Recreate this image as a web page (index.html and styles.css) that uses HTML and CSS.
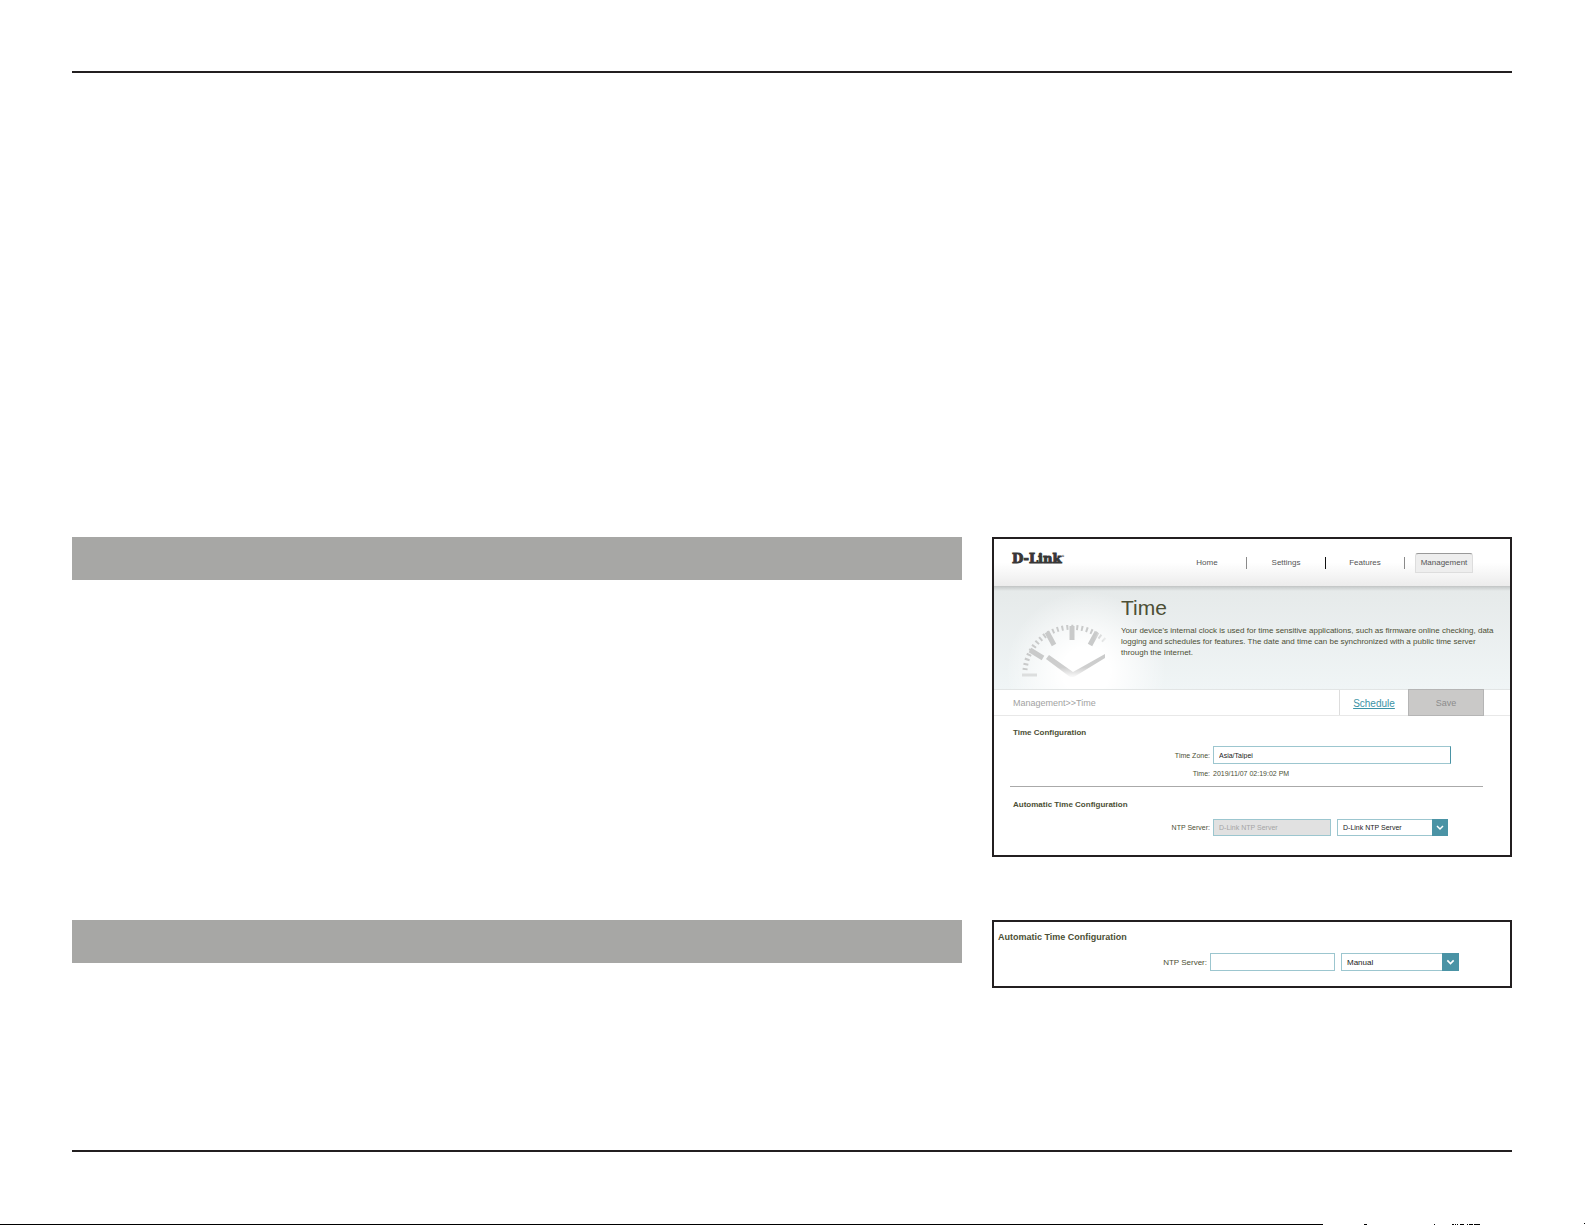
FILE: index.html
```html
<!DOCTYPE html>
<html lang="en">
<head>
<meta charset="UTF-8">
<meta name="viewport" content="width=device-width, initial-scale=1.0">
<title>Time</title>
<link rel="stylesheet" href="styles.css">
</head>
<body>
<div class="page">
	<div class="sections">
		<div class="bar"></div>
		<div class="panel">
			<header class="header">
				<div class="logo">D-Link<sup>®</sup></div>
				<nav class="nav">
					<a href="#">Home</a>
					<a href="#" class="dark">Settings</a>
					<a href="#">Features</a>
					<a href="#" class="active">Management</a>
				</nav>
			</header>
			<div class="banner">
				<svg class="clock" viewBox="0 0 110 70" width="110" height="70">
					<defs>
						<linearGradient id="fade" gradientUnits="userSpaceOnUse" x1="82" y1="0" x2="97" y2="0">
							<stop offset="0" stop-color="#c9caca"/>
							<stop offset="1" stop-color="#c9caca" stop-opacity="0.1"/>
						</linearGradient>
						<linearGradient id="hand" gradientUnits="userSpaceOnUse" x1="0" y1="38" x2="0" y2="62">
							<stop offset="0" stop-color="#c9caca"/>
							<stop offset="0.6" stop-color="#cfcfcf"/>
							<stop offset="1" stop-color="#cfcfcf" stop-opacity="0.1"/>
						</linearGradient>
					</defs>
					<!-- minute ticks -->
					<path d="M13 55A47 47 0 0 1 94 27" fill="none" stroke="url(#fade)" stroke-width="5" stroke-dasharray="2 2.92"/>
					<!-- hour ticks -->
					<path d="M18 35L31 43M35 17L42 30M60 11V25M85 17L78 30" fill="none" stroke="url(#fade)" stroke-width="5"/>
					<path d="M10 60H25" fill="none" stroke="#dcdede" stroke-width="3"/>
					<!-- hands -->
					<path d="M37 40L34 44L58 62H62L93 43V39L61 57Z" fill="url(#hand)"/>
				</svg>
				<div class="intro">
					<h1>Time</h1>
					<p>Your device's internal clock is used for time sensitive applications, such as firmware online checking, data<br>logging and schedules for features. The date and time can be synchronized with a public time server<br>through the Internet.</p>
				</div>
			</div>
			<div class="toolbar">
				<span class="crumb">Management&gt;&gt;Time</span>
				<a href="#" class="schedule">Schedule</a>
				<button class="save" disabled>Save</button>
			</div>
			<div class="settings">
				<h2>Time Configuration</h2>
				<div class="row zone-row">
					<label for="zone">Time Zone:</label>
					<input id="zone" class="zone" type="text" value="Asia/Taipei">
				</div>
				<div class="row time-row">
					<span class="label">Time:</span>
					<span>2019/11/07 02:19:02 PM</span>
				</div>
				<hr>
				<h2>Automatic Time Configuration</h2>
				<div class="row ntp-row">
					<label for="ntp">NTP Server:</label>
					<input id="ntp" type="text" value="D-Link NTP Server" disabled>
					<div class="dropdown">
						<select aria-label="NTP server type"><option>D-Link NTP Server</option><option>Manual</option></select>
						<svg viewBox="0 0 16 17"><path d="M5 7L8 10L11 7"/></svg>
					</div>
				</div>
			</div>
		</div>
		<div class="bar"></div>
		<div class="panel manual">
			<h2>Automatic Time Configuration</h2>
			<div class="row">
				<label for="ntp-manual">NTP Server:</label>
				<input id="ntp-manual" type="text">
				<div class="dropdown">
					<select aria-label="Manual NTP server type"><option>Manual</option><option>D-Link NTP Server</option></select>
					<svg viewBox="0 0 16 17"><path d="M5 7L8 10L11 7"/></svg>
				</div>
			</div>
		</div>
	</div>
</div>
<!-- top edge of the next page -->
<div class="next-page">
	<div class="edge"></div>
	<svg viewBox="0 0 262 2" width="262" height="2">
		<path d="M41 1h3v1h-3zM111 1h1v1h-1zM129 1h2v1h-2zM132 1h1v1h-1zM134 1h1v1h-1zM137 1h4v1h-4zM144 1h1v1h-1zM146 1h4v1h-4zM151 1h6v1h-6zM261 0h1v1h-1z"/>
	</svg>
</div>
</body>
</html>
```
FILE: styles.css
```css
* {
	box-sizing: border-box;
}
body {
	margin: 0;
	background: #fff;
	color: #4c4f35;
	font-family: "Liberation Sans", Arial, sans-serif;
	min-height: 100vh;
	display: flex;
	flex-direction: column;
}
h1, h2, p {
	margin: 0;
	font-weight: normal;
}
.page {
	margin: 71px 73px 0 72px;
	padding: 464px 0 162px;
	border-top: 2px solid #231f20;
	border-bottom: 2px solid #231f20;
}
.sections {
	display: grid;
	grid-template-columns: 1fr 520px;
	column-gap: 30px;
	row-gap: 63px;
	align-items: start;
}
.bar {
	height: 43px;
	background: #a7a7a5;
}
.panel {
	border: 2px solid #231f20;
	font-size: 7px;
}
/* header */
.header {
	display: flex;
	justify-content: space-between;
	align-items: flex-start;
	height: 48px;
	padding: 11px 37px 0 18px;
	background: linear-gradient(#fff 50%, #ececec);
	border-bottom: 1px solid #c5c8c8;
}
.logo {
	font-family: "DejaVu Serif", serif;
	font-weight: bold;
	font-size: 13px;
	line-height: 17px;
	color: #373737;
	-webkit-text-stroke: 1px #373737;
}
.logo sup {
	font-size: 3px;
	vertical-align: 6px;
	line-height: 1px;
	-webkit-text-stroke: 0;
}
.nav {
	display: flex;
	align-items: center;
	padding-top: 3px;
}
.nav a {
	width: 79px;
	border-right: 1px solid #8a8a8a;
	color: #555;
	font-size: 8px;
	line-height: 12px;
	text-align: center;
	text-decoration: none;
}
.nav a.dark {
	border-color: #111;
}
.nav a.active {
	width: 58px;
	margin-left: 10px;
	padding: 3px 0;
	background: #eee;
	border: 1px solid #ddd;
	border-top: 1px solid #999;
	border-radius: 3px 3px 1px 1px;
}
/* banner */
.banner {
	display: flex;
	height: 102px;
	padding-left: 18px;
	background: radial-gradient(ellipse 80px 80px at 92px 84px, #fff 30%, transparent), linear-gradient(#c9cdcd, #e6eaea 4px, #f0f5f6);
}
.clock {
	flex: none;
	margin: 28px -1px 0 0;
}
.intro {
	flex: 1;
	padding: 9px 12px 0 0;
}
.intro h1 {
	font-size: 21px;
	line-height: 24px;
}
.intro p {
	margin-top: 5px;
	font-size: 8px;
	line-height: 11px;
}
/* toolbar */
.toolbar {
	display: flex;
	align-items: stretch;
	height: 27px;
	padding: 0 26px 0 19px;
	border-top: 1px solid #e2e5e5;
	border-bottom: 1px solid #e8e8e8;
	font-size: 9px;
	line-height: 27px;
}
.crumb {
	flex: 1;
	color: #a2a2a2;
}
.schedule {
	width: 69px;
	border-left: 1px solid #ddd;
	color: #3b93a6;
	font-size: 10px;
	text-align: center;
}
.save {
	width: 76px;
	margin: -1px 0;
	padding: 0;
	border: 1px solid #b5b5b5;
	background: #cac9c8;
	color: #8c8c8c;
	font-family: inherit;
	font-size: 9px;
}
/* settings */
.settings {
	padding: 12px 27px 19px 16px;
}
h2 {
	padding-left: 3px;
	font-size: 8px;
	font-weight: bold;
	line-height: 10px;
}
.row {
	display: flex;
	align-items: center;
}
label, .label {
	width: 200px;
	margin-right: 3px;
	text-align: right;
}
input, select {
	width: 118px;
	height: 17px;
	padding: 0 5px;
	border: 1px solid #9cc6cf;
	border-radius: 0;
	background: #fff;
	color: #222;
	font-family: inherit;
	font-size: inherit;
}
input:disabled {
	background: #e1e1e1;
	color: #a5a5a5;
}
.zone {
	width: 238px;
	height: 18px;
	border-right-color: #4a93a5;
}
.zone-row {
	margin-top: 8px;
}
.time-row {
	margin-top: 5px;
	line-height: 10px;
}
hr {
	margin: 7px 0 13px;
	border: none;
	border-top: 1px solid #aaa;
}
.ntp-row {
	margin-top: 9px;
}
.dropdown {
	position: relative;
	margin-left: 6px;
}
.dropdown select {
	display: block;
	width: 111px;
	appearance: none;
}
.dropdown svg {
	position: absolute;
	top: 0;
	right: 0;
	width: 16px;
	height: 100%;
	background: #4a93a5;
	fill: none;
	stroke: #fff;
	stroke-width: 1.5;
	pointer-events: none;
}
/* manual server */
.manual {
	padding: 10px 0 15px 1px;
	font-size: 8px;
}
.manual h2 {
	font-size: 9px;
}
.manual .row {
	margin-top: 11px;
}
.manual label {
	width: 212px;
}
.manual input {
	width: 125px;
	height: 18px;
}
.manual select {
	width: 118px;
	height: 18px;
}
.manual .dropdown svg {
	width: 17px;
}
/* next page */
.next-page {
	display: flex;
	align-items: flex-end;
	margin-top: auto;
}
.edge {
	flex: 1;
	height: 1px;
	background: #000;
}
.next-page svg {
	display: block;
}
```
